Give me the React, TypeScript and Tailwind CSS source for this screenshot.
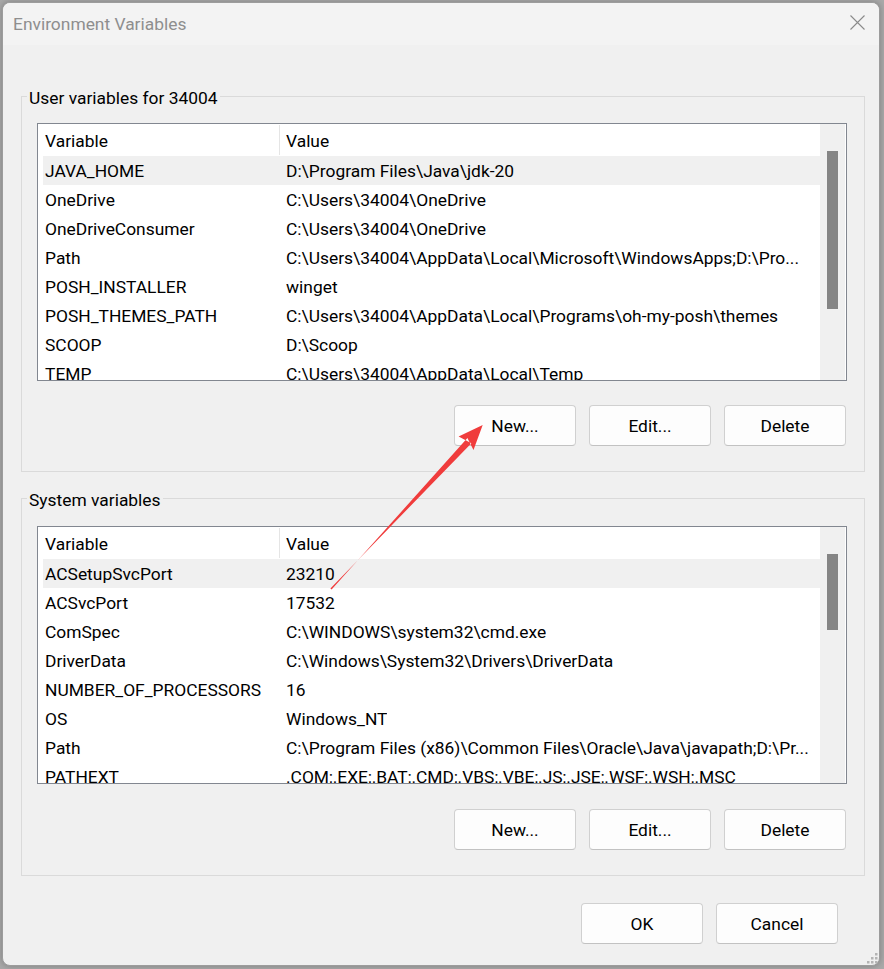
import React from "react";

type EnvVar = { name: string; value: string };

const userVars: EnvVar[] = [
  { name: "JAVA_HOME", value: "D:\\Program Files\\Java\\jdk-20" },
  { name: "OneDrive", value: "C:\\Users\\34004\\OneDrive" },
  { name: "OneDriveConsumer", value: "C:\\Users\\34004\\OneDrive" },
  { name: "Path", value: "C:\\Users\\34004\\AppData\\Local\\Microsoft\\WindowsApps;D:\\Pro..." },
  { name: "POSH_INSTALLER", value: "winget" },
  { name: "POSH_THEMES_PATH", value: "C:\\Users\\34004\\AppData\\Local\\Programs\\oh-my-posh\\themes" },
  { name: "SCOOP", value: "D:\\Scoop" },
  { name: "TEMP", value: "C:\\Users\\34004\\AppData\\Local\\Temp" },
];

const systemVars: EnvVar[] = [
  { name: "ACSetupSvcPort", value: "23210" },
  { name: "ACSvcPort", value: "17532" },
  { name: "ComSpec", value: "C:\\WINDOWS\\system32\\cmd.exe" },
  { name: "DriverData", value: "C:\\Windows\\System32\\Drivers\\DriverData" },
  { name: "NUMBER_OF_PROCESSORS", value: "16" },
  { name: "OS", value: "Windows_NT" },
  { name: "Path", value: "C:\\Program Files (x86)\\Common Files\\Oracle\\Java\\javapath;D:\\Pr..." },
  { name: "PATHEXT", value: ".COM;.EXE;.BAT;.CMD;.VBS;.VBE;.JS;.JSE;.WSF;.WSH;.MSC" },
];

const WinButton: React.FC<{ label: string }> = ({ label }) => (
  <button className="flex h-[41px] w-[122px] items-center justify-center rounded-[4px] border border-[#d0d0d0] border-b-[#c2c2c2] bg-[#fdfdfd] pt-[1px] text-black">
    {label}
  </button>
);

const VarList: React.FC<{ rows: EnvVar[]; thumb: string }> = ({ rows, thumb }) => (
  <div className="flex h-[258px] w-[810px] overflow-hidden border border-[#828790] bg-white">
    <div className="min-w-0 flex-1 overflow-hidden pl-[5px]">
      <div className="flex h-[32px] items-center">
        <div className="w-[236px] pl-[2px] pt-[3px]">Variable</div>
        <div className="h-[30px] w-px bg-[#e5e5e5]" />
        <div className="pl-[6px] pt-[3px]">Value</div>
      </div>
      {rows.map((row, i) => (
        <div
          key={row.name}
          className={`flex h-[29px] items-center whitespace-nowrap pt-[2px] ${i === 0 ? "bg-[#f0f0f0]" : ""}`}
        >
          <div className="w-[237px] shrink-0 overflow-hidden pl-[2px]">{row.name}</div>
          <div className="min-w-0 overflow-hidden pl-[6px]">{row.value}</div>
        </div>
      ))}
    </div>
    <div className="w-[25px] shrink-0 bg-[#f0f0f0] pl-[7px] pt-[27px]">
      <div className={`w-[11px] bg-[#858585] ${thumb}`} />
    </div>
    <div className="w-px shrink-0" />
  </div>
);

const GroupBox: React.FC<{
  title: string;
  rows: EnvVar[];
  thumb: string;
  gap: string;
  className: string;
  bodyTop: string;
}> = ({ title, rows, thumb, gap, className, bodyTop }) => (
  <fieldset className={`w-[844px] border border-[#dadada] p-0 ${className}`}>
    <legend className="ml-[5px] px-[2px] pt-[4px] leading-[20px] text-black">{title}</legend>
    <div className={`pb-[25px] pl-[15px] ${bodyTop}`}>
      <VarList rows={rows} thumb={thumb} />
      <div className={`mr-[18px] flex justify-end gap-[13px] ${gap}`}>
        <WinButton label="New..." />
        <WinButton label="Edit..." />
        <WinButton label="Delete" />
      </div>
    </div>
  </fieldset>
);

export default function App() {
  return (
    <div className="relative h-[969px] w-[884px] overflow-hidden bg-[#a9a9a9] pl-[2px] pt-[2px] font-['Roboto',sans-serif] text-[17.4px]">
      <div className="relative flex h-[964px] w-[878px] flex-col overflow-hidden rounded-[8px] border border-[#9c9c9c] bg-[#f0f0f0] shadow-[0_0_6px_rgba(0,0,0,0.25)]">
        {/* title bar */}
        <div className="flex h-[42px] shrink-0 items-center justify-between bg-[#f3f3f3] pl-[10px] pr-[14px]">
          <span className="text-[#8e8e8e]">Environment Variables</span>
          <svg width="15" height="15" viewBox="0 0 15 15" className="mb-[3px]">
            <path d="M0.5 0.5 L14.5 14.5 M14.5 0.5 L0.5 14.5" stroke="#8a8a8a" strokeWidth="1.1" />
          </svg>
        </div>

        <GroupBox
          title="User variables for 34004"
          rows={userVars}
          thumb="h-[158px]"
          gap="mt-[24px]"
          className="ml-[18px] mt-[39px]"
          bodyTop="pt-[15px]"
        />
        <GroupBox
          title="System variables"
          rows={systemVars}
          thumb="h-[76px]"
          gap="mt-[25px]"
          className="ml-[18px] mt-[14px]"
          bodyTop="pt-[16px]"
        />

        <div className="mt-[27px] flex justify-end gap-[13px] pr-[41px]">
          <WinButton label="OK" />
          <WinButton label="Cancel" />
        </div>

        {/* resize grip */}
        <svg width="11" height="11" viewBox="0 0 11 11" className="absolute bottom-[1px] right-[1px]">
          <rect x="8" y="0" width="2.5" height="2.5" fill="#b4b4b4" />
          <rect x="4" y="4" width="2.5" height="2.5" fill="#b4b4b4" />
          <rect x="8" y="4" width="2.5" height="2.5" fill="#b4b4b4" />
          <rect x="0" y="8" width="2.5" height="2.5" fill="#b4b4b4" />
          <rect x="4" y="8" width="2.5" height="2.5" fill="#b4b4b4" />
          <rect x="8" y="8" width="2.5" height="2.5" fill="#b4b4b4" />
        </svg>
      </div>

      {/* red annotation arrow */}
      <svg width="884" height="969" className="pointer-events-none absolute left-0 top-0">
        <polygon
          points="482.7,425 473.5,450 467.4,438 331.6,589.5 330.4,588.5 471.4,443.2 458.6,436.4"
          fill="#f03c3c"
        />
      </svg>
    </div>
  );
}
